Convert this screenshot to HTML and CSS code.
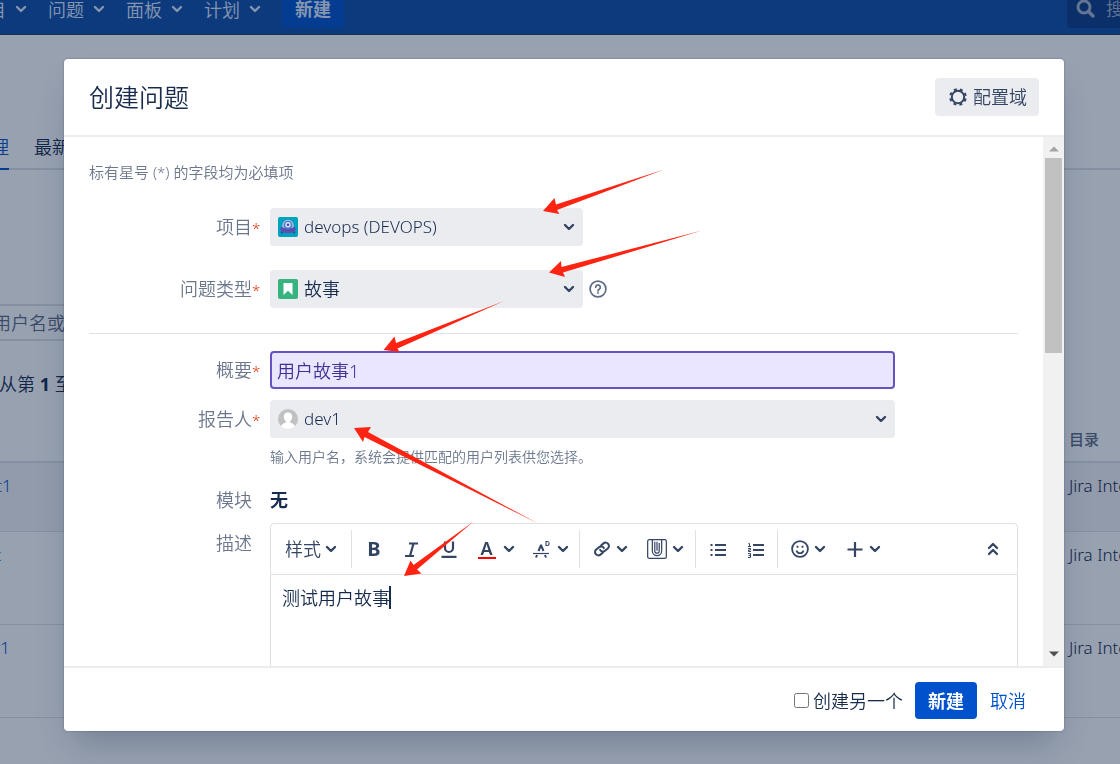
FILE: index.html
```html
<!DOCTYPE html>
<html lang="zh-CN">
<head>
<meta charset="utf-8">
<title>创建问题</title>
<link rel="stylesheet" href="styles.css">
</head>
<body>
<svg class="defs" aria-hidden="true">
  <symbol id="chev" viewBox="0 0 12 12"><path d="M2 4l4 4 4-4" fill="none" stroke="currentColor" stroke-width="2.4" stroke-linecap="round" stroke-linejoin="round"/></symbol>
</svg>

<div class="page">
  <header class="topbar">
    <nav class="topnav">
      <a href="#">项目<svg class="chev"><use href="#chev"/></svg></a>
      <a href="#">问题<svg class="chev"><use href="#chev"/></svg></a>
      <a href="#">面板<svg class="chev"><use href="#chev"/></svg></a>
      <a href="#">计划<svg class="chev"><use href="#chev"/></svg></a>
      <button class="btn top-create" type="button">新建</button>
    </nav>
    <div class="top-search">
      <svg viewBox="0 0 20 20" width="20" height="20"><circle cx="8" cy="8" r="6" fill="none" stroke="currentColor" stroke-width="3"/><path d="M12.5 12.5l4.500 4.500" stroke="currentColor" stroke-width="3.500" stroke-linecap="round"/></svg>
      <span>搜索</span>
    </div>
  </header>
  <main class="admin">
    <nav class="tabs"><a class="active" href="#">管理</a><a href="#">最新</a></nav>
    <input class="user-filter" type="text" aria-label="用户名" placeholder="用户名或电子邮件">
    <p class="count">从第 <b>1</b> 至</p>
    <table class="users">
      <thead><tr><th></th><th class="dir">目录</th></tr></thead>
      <tbody>
        <tr class="first"><td><a href="#">test1</a></td><td>Jira Internal</td></tr>
        <tr><td><a href="#">doc</a></td><td>Jira Internal</td></tr>
        <tr><td><a href="#">dev1</a></td><td>Jira Internal</td></tr>
      </tbody>
    </table>
  </main>
</div>

<div class="overlay">
  <section class="dialog" role="dialog" aria-labelledby="dlg-title">
    <header class="dialog-head">
      <h1 id="dlg-title">创建问题</h1>
      <button class="btn config" type="button">
        <svg viewBox="0 0 20 20" width="20" height="20"><circle cx="10" cy="10" r="6.200" fill="none" stroke="currentColor" stroke-width="2"/><circle cx="10" cy="10" r="7.800" fill="none" stroke="currentColor" stroke-width="2" stroke-dasharray="3 3.126" stroke-dashoffset="-1.600"/></svg>
        配置域
      </button>
    </header>
    <div class="dialog-body">
      <form class="form" id="create-form">
        <p class="intro">标有星号 (*) 的字段均为必填项</p>
        <div class="row">
          <label for="project">项目<i>*</i></label>
          <div class="picker short">
            <svg class="lead" viewBox="0 0 20 20"><rect width="20" height="20" rx="2" fill="#00a3bf"/><path d="M5 13l-1.500 3.500M15 13l1.500 3.500" stroke="#403294" stroke-width="1.500"/><path d="M4.300 11V8.500a5.700 5.700 0 0 1 11.400 0V11z" fill="#b3bfe8"/><circle cx="10" cy="8" r="4.300" fill="#4c7bd0"/><circle cx="10" cy="7.800" r="2.700" fill="#dfe8ff"/><circle cx="10" cy="7.800" r="1.300" fill="#344fa5"/><path d="M2.200 12.300c0-1.300 1-2 2.500-2.300 1.500 2.600 9.100 2.600 10.600 0 1.500.3 2.500 1 2.500 2.300 0 2-3.500 3.900-7.800 3.900s-7.800-1.900-7.800-3.900z" fill="#5e4db2"/></svg>
            <select id="project"><option>devops (DEVOPS)</option></select>
            <svg class="chev"><use href="#chev"/></svg>
          </div>
        </div>
        <div class="row type-row">
          <label for="type">问题类型<i>*</i></label>
          <div class="with-help">
            <div class="picker short">
              <svg class="lead" viewBox="0 0 20 20"><rect width="20" height="20" rx="2" fill="#36b37e"/><path d="M5.500 4h9v12L10 11.800 5.500 16z" fill="#fff"/></svg>
              <select id="type" class="cjk"><option>故事</option></select>
              <svg class="chev"><use href="#chev"/></svg>
            </div>
            <a class="help" href="#" aria-label="帮助"><svg viewBox="0 0 18 18" width="18" height="18" fill="none" stroke="currentColor" stroke-width="1.700"><circle cx="9" cy="9" r="7.900"/><path d="M6.700 7.200a2.300 2.300 0 1 1 3.500 2c-.9.500-1.200.8-1.200 1.700" stroke-linecap="round"/><circle cx="9" cy="13" r=".5" fill="currentColor" stroke-width="1"/></svg></a>
          </div>
        </div>
        <hr>
        <div class="row">
          <label for="summary">概要<i>*</i></label>
          <input class="summary" id="summary" type="text" value="用户故事1">
        </div>
        <div class="row reporter-row">
          <label for="reporter">报告人<i>*</i></label>
          <div class="picker long">
            <svg class="lead" viewBox="0 0 20 20"><circle cx="10" cy="10" r="10" fill="#c1c1c1"/><path d="M10 3.500c2.800 0 4.200 1.800 4.200 4.200 0 2-.8 3.600-2 4.400v1.300c2 .5 3.900 1.300 4.700 3.800C15.200 19 12.800 20 10 20s-5.200-1-6.900-2.800c.8-2.500 2.700-3.300 4.700-3.800v-1.300c-1.200-.8-2-2.400-2-4.400 0-2.400 1.400-4.200 4.200-4.200z" fill="#fff"/></svg>
            <select id="reporter"><option>dev1</option></select>
            <svg class="chev"><use href="#chev"/></svg>
          </div>
        </div>
        <p class="hint">输入用户名，系统会提供匹配的用户列表供您选择。</p>
        <div class="row text-row"><span class="label">模块</span><strong>无</strong></div>
        <div class="row editor-row">
          <label class="label" for="desc">描述</label>
          <div class="editor">
            <div class="toolbar">
              <div class="group"><button type="button" class="style">样式<svg class="chev"><use href="#chev"/></svg></button></div>
              <div class="group">
                <button type="button" class="single bold">B</button>
                <button type="button" class="single" aria-label="斜体"><svg viewBox="0 0 18 18" width="18" height="18" fill="none" stroke="currentColor" stroke-width="2.200"><path d="M6 3.500h9M2 16h9M10.500 3.500L7 16"/></svg></button>
                <button type="button" class="single" aria-label="下划线"><svg viewBox="0 0 18 18" width="18" height="18" fill="none" stroke="currentColor" stroke-width="2.200"><path d="M4 1.500v6.500a4 4 0 0 0 8 0V1.500M.5 16.800h15"/></svg></button>
                <button type="button" class="drop"><span class="color-a">A</span><svg class="chev"><use href="#chev"/></svg></button>
                <button type="button" class="drop" aria-label="更多格式"><svg viewBox="0 0 18 18" width="18" height="18" fill="none" stroke="currentColor"><path d="M6.500 11l2.300-5.500h.4l2.300 5.500" stroke-width="2"/><path d="M1 13.500h16" stroke-width="1.200"/><path d="M5 15l-1 2.500M13 15l1 2.500" stroke-width="2"/><path d="M14 1.500v4h1.500c2.200 0 2.200-4 0-4z" stroke-width="1.100"/></svg><svg class="chev"><use href="#chev"/></svg></button>
              </div>
              <div class="group tight">
                <button type="button" class="drop" aria-label="链接"><svg viewBox="0 0 18 18" width="18" height="18" fill="none" stroke="currentColor" stroke-width="2" stroke-linecap="round"><g transform="rotate(-40 9 9)"><path d="M7.500 12.300H4.200a3.300 3.300 0 0 1 0-6.600h3.600a3.300 3.300 0 0 1 3.200 3.800"/><path d="M10.500 5.700h3.300a3.300 3.300 0 0 1 0 6.600h-3.600A3.300 3.300 0 0 1 7 8.500"/></g></svg><svg class="chev"><use href="#chev"/></svg></button>
                <button type="button" class="drop" aria-label="附件"><svg viewBox="0 0 18 18" width="20" height="20" fill="none" stroke="currentColor" stroke-width="1.100"><rect x=".6" y=".6" width="16.800" height="16.800" rx="1.500"/><path d="M4.800 1v9.800a4.200 4.200 0 0 0 8.400 0V1M7 2.500v8.300a2 2 0 0 0 4 0V3.500M9 2.500v8"/></svg><svg class="chev"><use href="#chev"/></svg></button>
              </div>
              <div class="group">
                <button type="button" class="single" aria-label="项目列表"><svg viewBox="0 0 18 18" width="18" height="18" stroke="currentColor" stroke-width="2"><path d="M6 5h11M6 10h11M6 15h11M1.500 5h2M1.500 10h2M1.500 15h2"/></svg></button>
                <button type="button" class="single" aria-label="编号列表"><svg viewBox="0 0 18 18" width="18" height="18" fill="none" stroke="currentColor"><path d="M6 5h11M6 10h11M6 15h11" stroke-width="2"/><path d="M1.500 3.500h1V6M1 6.500h3M1 8.500h2.500V10H1.500v1.500H4M1 13.500h2.500v4H1M1.500 15.500h2" stroke-width="1"/></svg></button>
              </div>
              <div class="group tight">
                <button type="button" class="drop" aria-label="表情"><svg viewBox="0 0 18 18" width="18" height="18" fill="none" stroke="currentColor" stroke-width="1.800"><circle cx="9" cy="9" r="7.900"/><path d="M5.500 10.500a3.600 3.600 0 0 0 7 0" stroke-width="1.600"/><path d="M6.500 5.700v2M11.500 5.700v2"/></svg><svg class="chev"><use href="#chev"/></svg></button>
                <button type="button" class="drop" aria-label="插入"><svg viewBox="0 0 18 18" width="18" height="18" stroke="currentColor" stroke-width="2.200"><path d="M9 2v15M1.500 9.500h15"/></svg><svg class="chev"><use href="#chev"/></svg></button>
              </div>
              <button type="button" class="collapse" aria-label="收起"><svg viewBox="0 0 12 14" width="12" height="14" fill="none" stroke="currentColor" stroke-width="2.300" stroke-linecap="round" stroke-linejoin="round"><path d="M2 6l4-4 4 4M2 12l4-4 4 4"/></svg></button>
            </div>
            <div class="editing">
              <textarea id="desc">测试用户故事</textarea>
              <span class="caret"></span>
            </div>
          </div>
        </div>
      </form>
      <div class="scrollbar" aria-hidden="true">
        <svg viewBox="0 0 10 6" width="10" height="6"><path d="M0 5.500h10L5 .5z" fill="#a3a3a3"/></svg>
        <div class="track"><div class="thumb"></div></div>
        <svg viewBox="0 0 10 6" width="10" height="6"><path d="M0 .5h10L5 5.500z" fill="#505050"/></svg>
      </div>
    </div>
    <footer class="dialog-foot">
      <label class="another"><input type="checkbox">创建另一个</label>
      <button class="btn primary" type="submit" form="create-form">新建</button>
      <a class="cancel" href="#">取消</a>
    </footer>
  </section>
</div>

<svg class="marks" width="1120" height="764" viewBox="0 0 1120 764" fill="#ff2412" aria-hidden="true">
  <path d="M543 211l11.500-13 1.500 6.500L664 169.500 557 210l2.500 4z"/>
  <path d="M549 272.500L561 261l.5 6L702 230.500 563 272.500l2 4.500z"/>
  <path d="M383.500 350l11-13.500 1.500 6.500L504 301 397.500 348.500l2 3.500z"/>
  <path d="M354 428l17-1-3 5L538 523.500 364.500 437l-1.500 5z"/>
  <path d="M404 576l6.500-15.500 3 4.500L473.500 521.500 417 569.500l4.500 4z"/>
</svg>
</body>
</html>
```
FILE: styles.css
```css
* { box-sizing: border-box; }
body {
  margin: 0;
  height: 100vh;
  overflow: hidden;
  font: 18px/20px "Noto Sans", "Noto Sans CJK SC", sans-serif;
  font-weight: 350;
  color: #172b4d;
  background: #fff;
}
p, h1 { margin: 0; }
a { color: inherit; text-decoration: none; }
button, input, select, textarea { font: inherit; color: inherit; margin: 0; }
button { border: 0; background: none; padding: 0; cursor: pointer; }
svg { flex: none; display: block; }
.defs { position: absolute; width: 0; height: 0; }
.chev { width: 12px; height: 12px; }
.btn { height: 38px; border-radius: 4px; }

/* page behind the dialog, scrolled slightly down and right */
.page { margin-top: -17px; overflow: hidden; }
.topbar {
  display: flex;
  justify-content: space-between;
  align-items: center;
  height: 52px;
  background: #104da8;
  border-bottom: 1px solid #2e3d54;
  color: #deebff;
}
.topnav { display: flex; align-items: center; gap: 21px; margin-left: -30px; }
.topnav a { display: flex; align-items: center; gap: 9px; padding-top: 2px; }
.topnav .chev { margin-bottom: 2px; }
.top-create { padding: 0 13px; background: #0052cc; font-weight: 700; }
.top-search {
  display: flex;
  align-items: center;
  gap: 10px;
  width: 53px;
  height: 38px;
  padding-left: 9px;
  border-radius: 4px 0 0 4px;
  overflow: hidden;
  white-space: nowrap;
  background: #0d3c83;
  color: #a5b4cd;
}
.admin { margin-left: -27px; }
.tabs {
  display: flex;
  align-items: flex-end;
  gap: 25px;
  height: 135px;
  border-bottom: 2px solid #dfe1e6;
}
.tabs a { padding-bottom: 11px; margin-bottom: -2px; border-bottom: 2px solid transparent; }
.tabs .active { color: #0052cc; border-color: #0052cc; }
.user-filter {
  display: block;
  width: 300px;
  height: 37px;
  margin-top: 134px;
  padding: 0 18px;
  border: 2px solid #dfe1e6;
  background: #fff;
}
.user-filter::placeholder { color: #5e6c84; opacity: 1; }
.count { margin-top: 33px; padding-left: 26px; }
.users { width: 100%; margin-top: 35px; border-collapse: collapse; table-layout: fixed; text-align: left; }
.users th { height: 33px; padding: 0; vertical-align: top; font-size: 15px; color: #5e6c84; font-weight: 500; border-bottom: 2px solid #dfe1e6; }
.users .dir { width: 51px; }
.users td { height: 93px; padding: 13px 0; vertical-align: top; font-size: 17px; white-space: nowrap; border-bottom: 1px solid #dfe1e6; }
.users .first td { height: 69px; background: #f4f5f7; }
.users td a { color: #0052cc; }

.overlay {
  position: fixed;
  inset: 0;
  display: flex;
  padding: 59px 56px 33px 64px;
  background: rgba(9, 30, 66, .42);
}
.dialog {
  flex: 1;
  min-width: 0;
  display: flex;
  flex-direction: column;
  background: #fff;
  border-radius: 4px;
  overflow: hidden;
  box-shadow: 0 20px 32px -8px rgba(9, 30, 66, .24), 0 0 2px rgba(9, 30, 66, .4);
}
.dialog-head {
  display: flex;
  justify-content: space-between;
  align-items: center;
  height: 78px;
  padding: 0 25px;
  border-bottom: 2px solid #ebecf0;
}
h1 { font-size: 25px; line-height: 30px; font-weight: 350; }
.config { display: flex; align-items: center; gap: 5px; padding: 0 12px 0 13px; background: #ebecf0; color: #344563; }
.dialog-body { flex: 1; min-height: 0; display: flex; overflow: hidden; }
.form { flex: 1; min-width: 0; padding: 25px 25px 0; display: flex; flex-direction: column; }
.intro { font-size: 15px; color: #6b778c; margin-bottom: 26px; }
.row { display: grid; grid-template-columns: 169px minmax(0, 1fr); column-gap: 12px; align-items: center; flex: none; }
.row > label, .label { text-align: right; color: #6b778c; white-space: nowrap; }
.row > .label { padding-right: 6px; }
.row i { display: inline-block; width: 6px; font-style: normal; color: #de350b; font-size: 15px; }
.type-row { margin-top: 24px; }
.with-help { display: flex; align-items: center; gap: 6px; }
.help { color: #5e6c84; }
.picker { position: relative; width: 100%; }
.short { max-width: 313px; }
.long, .summary { max-width: 625px; }
.picker select {
  display: block;
  width: 100%;
  height: 38px;
  padding: 0 34px;
  border: 0;
  border-radius: 4px;
  appearance: none;
  background: #ebecf0;
  font-size: 17px;
}
.picker .cjk { font-size: 18px; }
.lead { position: absolute; left: 8px; top: 9px; width: 20px; height: 20px; }
.picker .chev { position: absolute; right: 8px; top: 13px; color: #344563; }
hr { width: 100%; height: 1px; margin: 25px 0 17px; border: 0; background: #dfe1e6; flex: none; }
.summary {
  width: 100%;
  height: 38px;
  padding: 0 5px;
  border: 2px solid #6554c0;
  border-radius: 4px;
  background: #eae6ff;
  color: #403294;
  outline: 0;
}
.reporter-row { margin-top: 11px; }
.hint { margin: 9px 0 23px 181px; font-size: 14px; color: #6b778c; }
.text-row strong { font-weight: 700; }
.editor-row { margin-top: 13px; align-items: start; }
.editor-row > label { padding-top: 10px; }
.editor { border: 1px solid #dfe1e6; border-radius: 4px; }
.toolbar { display: flex; align-items: center; height: 51px; border-bottom: 1px solid #dfe1e6; color: #344563; }
.group { display: flex; align-items: center; height: 38px; padding: 0 2px 0 3px; border-right: 1px solid #dfe1e6; }
.group:nth-child(5) { border: 0; }
.toolbar button { display: flex; align-items: center; justify-content: center; height: 38px; }
.toolbar .style { gap: 4px; padding: 0 12px 0 11px; }
.toolbar .single { width: 38px; }
.toolbar .drop { width: 54px; gap: 7px; }
.toolbar .tight .drop { width: 55px; gap: 5px; }
.toolbar .bold { font-weight: 700; font-size: 20px; }
.color-a { width: 18px; font-weight: 600; font-size: 18px; line-height: 18px; border-bottom: 2px solid #f00; }
.toolbar .collapse { margin-left: auto; margin-right: 18px; }
.editing { position: relative; }
textarea { display: block; width: 100%; height: 200px; padding: 13px 11px; border: 0; resize: none; outline: 0; background: none; }
.caret { position: absolute; left: 118px; top: 11px; width: 2px; height: 23px; background: #172b4d; }
.scrollbar { flex: none; width: 21px; display: flex; flex-direction: column; align-items: center; padding: 9px 0; background: #f1f1f1; }
.track { flex: 1; width: 17px; margin: 6px 0; }
.thumb { height: 40%; background: #c1c1c1; }
.dialog-foot {
  display: flex;
  justify-content: flex-end;
  align-items: center;
  height: 65px;
  padding: 2px 38px 0 0;
  border-top: 2px solid #ebecf0;
}
.another { display: flex; align-items: center; gap: 4px; margin-right: 12px; }
.another input { width: 15px; height: 15px; }
.primary { height: 37px; padding: 0 13px; background: #0052cc; color: #fff; font-weight: 700; }
.cancel { margin-left: 13px; color: #0052cc; }
.marks { position: absolute; left: 0; top: 0; pointer-events: none; }
```
